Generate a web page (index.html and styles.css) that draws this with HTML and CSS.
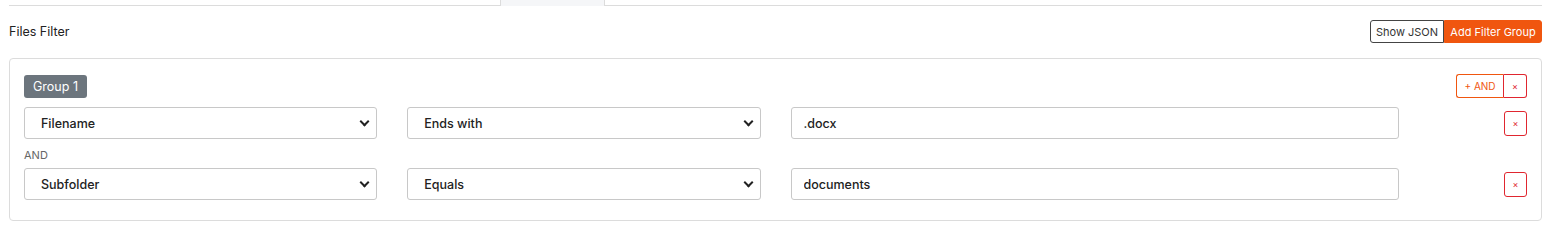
FILE: index.html
```html
<!DOCTYPE html>
<html lang="en">
<head>
  <meta charset="UTF-8">
  <meta name="viewport" content="width=device-width, initial-scale=1.0">
  <title>Files Filter</title>
  <link rel="stylesheet" href="styles.css">
</head>
<body>
  <div class="page">
    <div class="tabs">
      <div class="tab tab-active"></div>
    </div>

    <div class="filter-header">
      <span class="filter-title">Files Filter</span>
      <div class="btn-group">
        <button class="btn btn-outline">Show JSON</button>
        <button class="btn btn-primary">Add Filter Group</button>
      </div>
    </div>

    <div class="group-card">
      <div class="group-head">
        <span class="badge">Group 1</span>
        <div class="btn-group">
          <button class="btn-sm btn-and">+ AND</button>
          <button class="btn-sm btn-remove">&times;</button>
        </div>
      </div>

      <div class="row">
        <div class="col col-3">
          <div class="select-wrap">
            <select class="field">
              <option>Filename</option>
              <option>Subfolder</option>
              <option>Extension</option>
            </select>
          </div>
        </div>
        <div class="col col-3">
          <div class="select-wrap">
            <select class="field">
              <option>Ends with</option>
              <option>Equals</option>
              <option>Contains</option>
            </select>
          </div>
        </div>
        <div class="col col-5">
          <input class="field" type="text" value=".docx">
        </div>
        <div class="col col-1 col-end">
          <button class="btn-sm btn-remove btn-row">&times;</button>
        </div>
      </div>

      <div class="join-label">AND</div>

      <div class="row">
        <div class="col col-3">
          <div class="select-wrap">
            <select class="field">
              <option>Subfolder</option>
              <option>Filename</option>
              <option>Extension</option>
            </select>
          </div>
        </div>
        <div class="col col-3">
          <div class="select-wrap">
            <select class="field">
              <option>Equals</option>
              <option>Ends with</option>
              <option>Contains</option>
            </select>
          </div>
        </div>
        <div class="col col-5">
          <input class="field" type="text" value="documents">
        </div>
        <div class="col col-1 col-end">
          <button class="btn-sm btn-remove btn-row">&times;</button>
        </div>
      </div>
    </div>
  </div>
</body>
</html>
```

FILE: styles.css
```css
body {
  margin: 0;
  font-family: Inter, 'Noto Sans', sans-serif;
  background-color: #fff;
  color: #222;
}

.page {
  padding: 0 9px;
}

.tabs {
  display: flex;
  height: 5px;
  border-bottom: 1px solid #dcdcdc;
}

.tab-active {
  margin-left: 491px;
  width: 103px;
  height: 6px;
  background: #f5f6f8;
  border-left: 1px solid #dcdcdc;
  border-right: 1px solid #dcdcdc;
}

.filter-header {
  display: flex;
  justify-content: space-between;
  align-items: center;
  padding: 14px 0 15px;
}

.filter-title {
  font-size: 12.5px;
  color: #222;
}

.btn-group {
  display: flex;
}

.btn {
  height: 23px;
  font-family: inherit;
  font-size: 11px;
  padding: 0;
  white-space: nowrap;
  cursor: pointer;
}

.btn-outline {
  background: #fff;
  color: #333;
  border: 1px solid #444;
  border-radius: 3px 0 0 3px;
  width: 74px;
}

.btn-primary {
  background: #f0560f;
  color: #fff;
  border: 1px solid #f0560f;
  border-radius: 0 3px 3px 0;
  width: 98px;
}

.group-card {
  border: 1px solid #dcdcdc;
  border-radius: 4px;
  padding: 15px 14px 20px;
}

.group-head {
  display: flex;
  justify-content: space-between;
  align-items: center;
  margin-bottom: 9px;
}

.badge {
  display: inline-block;
  height: 23px;
  line-height: 23px;
  padding: 0 9px;
  font-size: 12.5px;
  color: #fff;
  background: #6c757d;
  border-radius: 3px;
}

.btn-sm {
  height: 24px;
  font-family: inherit;
  background: #fff;
  white-space: nowrap;
  cursor: pointer;
  padding: 0;
}

.btn-and {
  width: 48px;
  font-size: 10px;
  color: #f0560f;
  border: 1px solid #f0560f;
  border-right: 1px solid #e0262f;
  border-radius: 3px 0 0 3px;
}

.btn-remove {
  width: 23px;
  font-size: 9px;
  color: #e0262f;
  border: 1px solid #e0262f;
  border-left: none;
  border-radius: 0 3px 3px 0;
}

.btn-row {
  border-left: 1px solid #e0262f;
  border-radius: 3px;
  width: 23px;
  height: 25px;
}

.row {
  display: flex;
  align-items: center;
  margin: 0 -15px;
}

.col {
  box-sizing: border-box;
  padding: 0 15px;
}

.col-3 {
  width: 25%;
}

.col-5 {
  width: 41.6667%;
}

.col-1 {
  width: 8.3333%;
}

.col-end {
  display: flex;
  justify-content: flex-end;
}

.select-wrap {
  position: relative;
}

.select-wrap::after {
  content: '';
  position: absolute;
  right: 9px;
  top: 11px;
  width: 5px;
  height: 5px;
  border-right: 2px solid #222;
  border-bottom: 2px solid #222;
  transform: rotate(45deg);
  pointer-events: none;
}

.field {
  box-sizing: border-box;
  width: 100%;
  height: 32px;
  font-family: inherit;
  font-size: 12.5px;
  font-weight: 500;
  color: #222;
  background: #fff;
  border: 1px solid #c8c8c8;
  border-radius: 3px;
  padding: 0 12px;
  outline: none;
}

select.field {
  -webkit-appearance: none;
  appearance: none;
  padding: 0 16px;
}

.join-label {
  font-size: 11px;
  color: #666;
  line-height: 16px;
  margin: 8px 0 5px;
}
```
